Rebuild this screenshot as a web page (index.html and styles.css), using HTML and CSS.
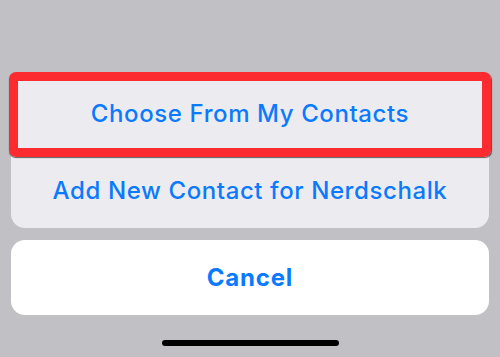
FILE: index.html
```html
<!DOCTYPE html>
<html lang="en">
<head>
    <meta charset="UTF-8">
    <meta name="viewport" content="width=device-width, initial-scale=1.0">
    <title>Share Contact</title>
    <link rel="stylesheet" href="styles.css">
</head>
<body>
    <div class="sheet">
        <div class="action-group">
            <div class="action highlighted">Choose From My Contacts</div>
            <div class="action">Add New Contact for Nerdschalk</div>
        </div>
        <div class="action-group cancel-group">
            <div class="action cancel">Cancel</div>
        </div>
        <div class="home-bar"></div>
    </div>
</body>
</html>
```

FILE: styles.css
```css
body {
    margin: 0;
    background-color: #c1c0c5;
    font-family: Inter, "Noto Sans", sans-serif;
    height: 357px;
    overflow: hidden;
}

.sheet {
    display: flex;
    flex-direction: column;
    padding: 75px 11px 0;
}

.action-group {
    background-color: #ececf0;
    border-radius: 14px;
}

.action {
    display: flex;
    justify-content: center;
    align-items: center;
    height: 76px;
    font-size: 24px;
    font-weight: 500;
    letter-spacing: 0.6px;
    color: #0a7aff;
}

.action + .action {
    border-top: 1px solid #d4d4d8;
    height: 76px;
}

.highlighted {
    position: relative;
}

.highlighted::after {
    content: "";
    position: absolute;
    top: -3px;
    left: -2px;
    right: -2px;
    bottom: -6px;
    border: 9px solid #fb2b30;
    border-radius: 7px;
    box-shadow: 0.5px 1px 1px rgba(0, 0, 0, 0.6);
}

.cancel-group {
    margin-top: 12px;
    background-color: #fff;
}

.cancel {
    height: 75px;
    font-weight: 700;
    letter-spacing: 0.8px;
}

.home-bar {
    align-self: center;
    width: 177px;
    height: 6px;
    margin-top: 25px;
    border-radius: 3px;
    background-color: #000;
}
```
